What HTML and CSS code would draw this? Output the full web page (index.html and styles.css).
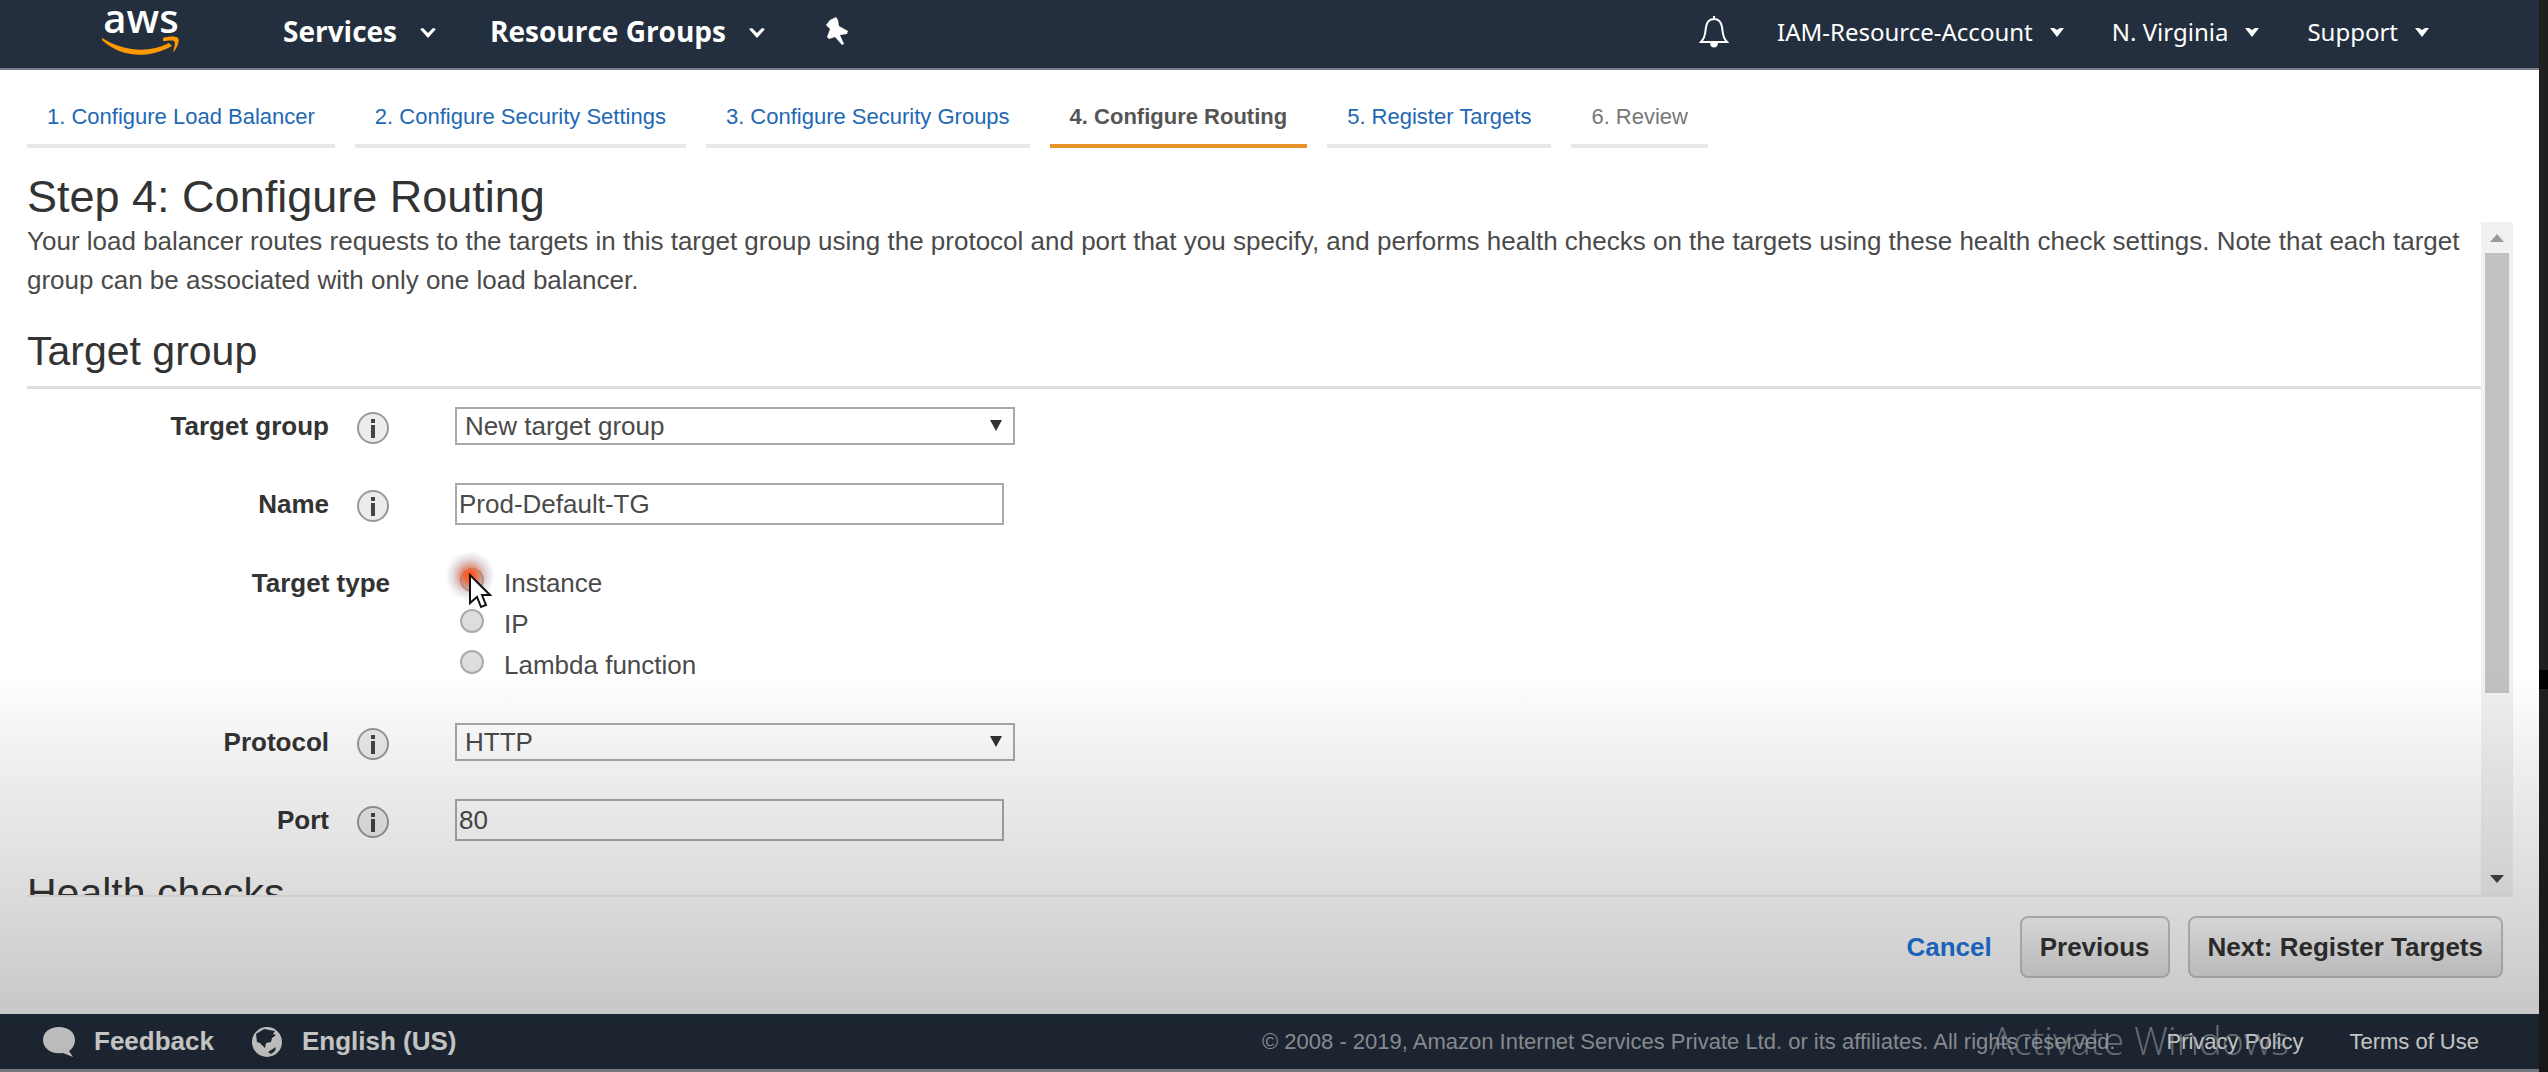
FILE: index.html
```html
<!DOCTYPE html>
<html lang="en">
<head>
<meta charset="utf-8">
<title>Step 4: Configure Routing</title>
<link rel="stylesheet" href="styles.css">
</head>
<body>
<div class="screen">
  <div class="page">
    <header class="topbar">
      <a class="logo" href="#" aria-label="aws">
        <svg width="80" height="60" viewBox="0 0 80 60">
          <text class="logo-text" x="40" y="33" text-anchor="middle">aws</text>
          <path d="M1 38C24 52 48 53 68 43L71 46C48 59 20 58 1 40Z" fill="#f90"/>
          <path d="M62 38C68 36 75 36 77 38C79 41 76 49 72 52C73 48 75 43 73 41C71 40 66 41 62 41Z" fill="#f90"/>
        </svg>
      </a>
      <nav class="nav-left">
        <a href="#">Services <svg class="chev" viewBox="0 0 18 12"><path d="M1 2L9 11L17 2L14 1L9 6L4 1Z"/></svg></a>
        <a href="#">Resource Groups <svg class="chev" viewBox="0 0 18 12"><path d="M1 2L9 11L17 2L14 1L9 6L4 1Z"/></svg></a>
        <a href="#" aria-label="Pin"><svg class="pin" viewBox="0 0 24 28"><path d="M5 3L11 0L13 3L14 9L23 14L22 17L15 18L19 27L17 28L10 20L4 22L2 20L5 12L1 8Z"/></svg></a>
      </nav>
      <nav class="nav-right">
        <a href="#" aria-label="Notifications"><svg class="bell" viewBox="0 0 30 34"><path d="M15 1V4M2 27C7 22 6 17 7 12C8 6 11 4 15 4C19 4 22 6 23 12C24 17 23 22 28 27Z" fill="none" stroke="#fff" stroke-width="2"/><path d="M11 28H19C19 34 11 34 11 28Z" fill="#fff"/></svg></a>
        <a href="#">IAM-Resource-Account <svg class="caret" viewBox="0 0 14 9"><path d="M0 0H4L7 2L10 0H14L7 9Z"/></svg></a>
        <a href="#">N. Virginia <svg class="caret" viewBox="0 0 14 9"><path d="M0 0H4L7 2L10 0H14L7 9Z"/></svg></a>
        <a href="#">Support <svg class="caret" viewBox="0 0 14 9"><path d="M0 0H4L7 2L10 0H14L7 9Z"/></svg></a>
      </nav>
    </header>

    <nav class="steps">
      <a href="#">1. Configure Load Balancer</a>
      <a href="#">2. Configure Security Settings</a>
      <a href="#">3. Configure Security Groups</a>
      <a href="#" class="current" aria-current="step">4. Configure Routing</a>
      <a href="#">5. Register Targets</a>
      <span>6. Review</span>
    </nav>

    <main class="main">
      <h1>Step 4: Configure Routing</h1>
      <div class="scroller">
        <form class="content">
          <p class="intro">Your load balancer routes requests to the targets in this target group using the protocol and port that you specify, and performs health checks on the targets using these health check settings. Note that each target group can be associated with only one load balancer.</p>
          <h2 class="ruled">Target group</h2>
          <div class="row">
            <label for="tg">Target group</label>
            <button type="button" class="info" aria-label="About target group"><svg viewBox="0 0 34 34"><circle cx="17" cy="17" r="15"/><path d="M15 8h4v4h-4zM15 14h4v13h-4z"/></svg></button>
            <div class="select"><select id="tg"><option>New target group</option></select><svg viewBox="0 0 12 11"><path d="M0 0H12L6 11Z"/></svg></div>
          </div>
          <div class="row">
            <label for="name">Name</label>
            <button type="button" class="info" aria-label="About name"><svg viewBox="0 0 34 34"><circle cx="17" cy="17" r="15"/><path d="M15 8h4v4h-4zM15 14h4v13h-4z"/></svg></button>
            <input class="text" id="name" type="text" value="Prod-Default-TG">
          </div>
          <div class="row types" role="radiogroup" aria-labelledby="type">
            <span class="label wide" id="type">Target type</span>
            <div class="radios">
              <label><span class="dot"><input type="radio" name="type" checked><span class="click"></span><svg class="cursor" viewBox="0 0 24 36"><path d="M2 2V30L9 24L13 34L18 32L14 22H22Z"/></svg></span>Instance</label>
              <label><span class="dot"><input type="radio" name="type"></span>IP</label>
              <label><span class="dot"><input type="radio" name="type"></span>Lambda function</label>
            </div>
          </div>
          <div class="row">
            <label for="proto">Protocol</label>
            <button type="button" class="info" aria-label="About protocol"><svg viewBox="0 0 34 34"><circle cx="17" cy="17" r="15"/><path d="M15 8h4v4h-4zM15 14h4v13h-4z"/></svg></button>
            <div class="select"><select id="proto"><option>HTTP</option></select><svg viewBox="0 0 12 11"><path d="M0 0H12L6 11Z"/></svg></div>
          </div>
          <div class="row last">
            <label for="port">Port</label>
            <button type="button" class="info" aria-label="About port"><svg viewBox="0 0 34 34"><circle cx="17" cy="17" r="15"/><path d="M15 8h4v4h-4zM15 14h4v13h-4z"/></svg></button>
            <input class="text" id="port" type="text" value="80">
          </div>
          <h2>Health checks</h2>
        </form>
        <div class="scrollbar">
          <svg class="up" viewBox="0 0 14 8"><path d="M0 8H14L7 0Z"/></svg>
          <div class="track"><div class="thumb"></div></div>
          <svg class="down" viewBox="0 0 14 8"><path d="M0 0H14L7 8Z"/></svg>
        </div>
      </div>
    </main>

    <div class="actions">
      <a href="#">Cancel</a>
      <button type="button">Previous</button>
      <button type="button">Next: Register Targets</button>
    </div>

    <footer class="footer">
      <a class="strong" href="#"><svg viewBox="0 0 32 32"><path d="M16 1C25 1 32 6 32 14C32 19 29 23 26 25L30 31L20 27C8 29 0 22 0 14C0 6 7 1 16 1Z"/></svg>Feedback</a>
      <a class="strong" href="#"><svg viewBox="0 0 32 32"><circle cx="16" cy="16" r="15"/><path class="land" d="M5 8L13 3L24 5L22 8L25 9L21 12L20 16L15 17L14 22L9 17L6 16ZM17 26L25 21L24 25L20 28Z"/></svg>English (US)</a>
      <span class="copy">© 2008 - 2019, Amazon Internet Services Private Ltd. or its affiliates. All rights reserved.</span>
      <a href="#">Privacy Policy</a>
      <a href="#">Terms of Use</a>
      <span class="watermark">Activate Windows</span>
    </footer>
  </div>
  <div class="edge"></div>
</div>
</body>
</html>
```
FILE: styles.css
```css
* { box-sizing: border-box; }
body { margin: 0; font-family: "Liberation Sans", Arial, sans-serif; font-size: 26px; color: #4a4a4a; background: #fff; }
a { color: #1e68b4; text-decoration: none; }
button, input, select { font: inherit; color: inherit; }

.screen { position: relative; display: flex; min-height: 100vh; }
/* shade rising from the bottom of the window */
.screen::after {
  content: ""; position: absolute; left: 0; right: 0; bottom: 0; height: 400px; pointer-events: none;
  background: linear-gradient(rgba(0,0,0,0), rgba(0,0,0,.065) 24%, rgba(0,0,0,.14) 56%, rgba(0,0,0,.22) 86%, rgba(0,0,0,.25));
}
.page { flex: 1; min-width: 0; height: 100vh; display: flex; flex-direction: column; border-bottom: 3px solid #9a9ea6; }
.edge { width: 9px; background: linear-gradient(#1f1f1f 670px, #000 670px, #000 689px, #1f1f1f 689px); }

.topbar { display: flex; height: 70px; flex: none; background: #232f3e; border-bottom: 2px solid #77808c; padding: 0 110px 0 101px; }
.topbar a { color: #fff; display: flex; align-items: center; }
.logo { align-self: flex-start; width: 80px; }
.logo svg { overflow: visible; }
.logo-text { font: 600 40px "Open Sans", sans-serif; fill: #fff; }
.nav-left, .nav-right { display: flex; align-items: center; height: 62px; }
.nav-left { margin-left: 102px; gap: 53px; font: 700 28px "Open Sans", sans-serif; }
.nav-left a { gap: 22px; }
.nav-left a:last-child { margin-left: 6px; }
.nav-right { margin-left: auto; gap: 48px; font: 24px "Noto Sans", sans-serif; }
.nav-right a { gap: 17px; }
.chev { width: 18px; height: 12px; fill: #fff; margin-top: 4px; }
.caret { width: 14px; height: 9px; fill: #fff; margin-top: 2px; }
.pin { width: 24px; height: 28px; fill: #fff; }
.bell { width: 30px; height: 34px; margin-top: 2px; }

.steps { display: flex; gap: 20px; padding: 30px 27px 0; font-size: 22px; flex: none; }
.steps > * { padding: 4px 20px 0; height: 48px; line-height: 26px; border-bottom: 4px solid #e8e8e8; color: #1e68b4; white-space: nowrap; }
.steps > span { color: #777; }
.steps > .current { color: #555; font-weight: bold; border-color: #e8922a; }

.main { flex: 1; min-height: 0; display: flex; flex-direction: column; padding: 24px 26px 0 27px; }
h1, h2 { font-weight: normal; color: #333; margin: 0; }
h1 { font-size: 45px; line-height: 50px; flex: none; }
h2 { font-size: 41px; line-height: 48px; }
.scroller { flex: 1; min-height: 0; display: flex; border-bottom: 2px solid #eee; overflow: hidden; }
.content { flex: 1; min-width: 0; }
.intro { margin: 0 0 27px; line-height: 39px; }
.ruled { border-bottom: 3px solid #ddd; padding-bottom: 11px; margin-bottom: 16px; }
.row { display: grid; grid-template-columns: 302px 27px 34px 65px 1fr; align-items: center; height: 42px; margin-bottom: 36px; }
.row.last { margin-bottom: 28px; }
.row > label, .label { text-align: right; font-weight: bold; color: #333; }
.row > .info { grid-column: 3; }
.row > .select, .row > .text, .radios { grid-column: 5; }
.label.wide { grid-column: 1 / 4; line-height: 41px; }
.info { width: 34px; height: 34px; padding: 0; border: 0; background: none; margin-top: 3px; }
.info svg { display: block; fill: #444; }
.info circle { fill: #ececec; stroke: #999; stroke-width: 2; }
.select { position: relative; width: 560px; }
.select select { appearance: none; display: block; width: 100%; height: 38px; padding: 0 8px; border: 2px solid #a9a9a9; border-radius: 0; background: #fff; }
.select svg { position: absolute; right: 13px; top: 13px; width: 12px; height: 11px; fill: #333; }
.text { width: 549px; height: 42px; padding: 0 2px; border: 2px solid #a9a9a9; background: #fff; }
.types { height: auto; align-items: start; margin-top: 38px; margin-bottom: 35px; }
.radios { display: flex; flex-direction: column; }
.radios label { display: flex; align-items: center; gap: 20px; height: 41px; margin-left: 5px; }
.dot { position: relative; width: 24px; height: 24px; margin-bottom: 7px; }
.dot input { appearance: none; display: block; width: 24px; height: 24px; margin: 0; border: 2px solid #aaa; border-radius: 50%; background: #ddd; }
.click { position: absolute; left: -18px; top: -20px; width: 52px; height: 52px; border-radius: 50%; background: radial-gradient(circle at 28px 28px, #fb5a22 0 4px, rgba(200,110,90,.6) 11px, rgba(170,140,150,.3) 17px, rgba(170,150,160,0) 25px); }
.cursor { position: absolute; left: 8px; top: 5px; width: 24px; height: 36px; fill: #fff; stroke: #111; stroke-width: 2; z-index: 1; }

.scrollbar { width: 32px; background: #f1f1f1; display: flex; flex-direction: column; align-items: center; padding: 12px 0 12px; }
.scrollbar svg { width: 14px; height: 8px; flex: none; }
.up { fill: #999; }
.down { fill: #444; }
.track { flex: 1; width: 24px; padding: 11px 0; }
.thumb { height: 72%; background: #c1c1c1; }

.actions { flex: none; display: flex; justify-content: flex-end; align-items: flex-start; gap: 18px; padding: 19px 36px 0; height: 117px; font-weight: bold; }
.actions a { line-height: 62px; margin-right: 10px; color: #1f76e0; }
.actions button { height: 62px; padding: 0 18px; border: 2px solid #c6c6c6; border-radius: 8px; background: linear-gradient(#fcfcfc, #e6e6e6); color: #333; font-weight: bold; }

.footer { position: relative; flex: none; display: flex; align-items: center; height: 55px; padding: 0 60px 0 43px; background: #232f3e; font-size: 22px; color: #aeb4bb; white-space: nowrap; }
.footer a { color: #fff; }
.footer .strong { display: flex; align-items: center; gap: 19px; font-size: 26px; font-weight: bold; margin-right: 37px; }
.footer svg { width: 32px; height: 32px; fill: #f4f4f4; }
.footer .land { fill: #232f3e; }
.copy { margin-left: auto; margin-right: 51px; }
.footer > a:not(.strong) + a { margin-left: 46px; }
.watermark { position: absolute; right: 250px; top: 1px; font: 300 38px/50px "Open Sans", sans-serif; color: rgba(200,205,210,.6); pointer-events: none; }
```
